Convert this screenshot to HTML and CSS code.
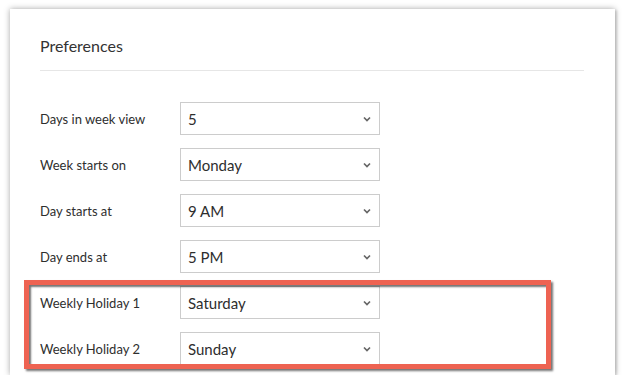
FILE: index.html
```html
<!DOCTYPE html>
<html>
<head>
<meta charset="utf-8">
<link rel="stylesheet" href="styles.css">
</head>
<body>
<div class="card">
  <h2 class="title">Preferences</h2>
  <div class="divider"></div>
  <div class="rows">
    <div class="row"><span class="label">Days in week view</span><div class="select"><span>5</span><svg class="chev" width="8" height="6" viewBox="0 0 8 6"><polyline points="1,1.5 4,4.5 7,1.5"/></svg></div></div>
    <div class="row"><span class="label">Week starts on</span><div class="select"><span>Monday</span><svg class="chev" width="8" height="6" viewBox="0 0 8 6"><polyline points="1,1.5 4,4.5 7,1.5"/></svg></div></div>
    <div class="row"><span class="label">Day starts at</span><div class="select"><span>9 AM</span><svg class="chev" width="8" height="6" viewBox="0 0 8 6"><polyline points="1,1.5 4,4.5 7,1.5"/></svg></div></div>
    <div class="row"><span class="label">Day ends at</span><div class="select"><span>5 PM</span><svg class="chev" width="8" height="6" viewBox="0 0 8 6"><polyline points="1,1.5 4,4.5 7,1.5"/></svg></div></div>
    <div class="row"><span class="label">Weekly Holiday 1</span><div class="select"><span>Saturday</span><svg class="chev" width="8" height="6" viewBox="0 0 8 6"><polyline points="1,1.5 4,4.5 7,1.5"/></svg></div></div>
    <div class="row"><span class="label">Weekly Holiday 2</span><div class="select"><span>Sunday</span><svg class="chev" width="8" height="6" viewBox="0 0 8 6"><polyline points="1,1.5 4,4.5 7,1.5"/></svg></div></div>
  </div>
  <div class="highlight"></div>
</div>
</body>
</html>
```
FILE: styles.css
```css
html, body {
  margin: 0;
  padding: 0;
  background: #ffffff;
}
body {
  font-family: "Lato", "Open Sans", sans-serif;
  color: #333333;
}
.card {
  position: relative;
  box-sizing: border-box;
  width: 605px;
  height: 366px;
  margin: 9px 0 0 10px;
  padding: 28px 31px 0 30px;
  background: #ffffff;
  box-shadow: 0 0 6px rgba(0, 0, 0, 0.35), 2px 1px 2px rgba(0, 0, 0, 0.12);
}
.title {
  margin: 0;
  font-size: 16px;
  font-weight: 400;
  line-height: 18px;
  color: #333333;
}
.divider {
  height: 1px;
  background: #e6e6e6;
  margin-top: 15px;
}
.rows {
  display: flex;
  flex-direction: column;
  gap: 13px;
  margin-top: 31px;
}
.row {
  display: flex;
  align-items: center;
  height: 33px;
}
.label {
  width: 140px;
  font-size: 13px;
  color: #2e2e2e;
}
.select {
  box-sizing: border-box;
  width: 200px;
  height: 33px;
  border: 1px solid #cccccc;
  display: flex;
  align-items: center;
  justify-content: space-between;
  padding: 0 8px 0 7px;
  font-size: 15px;
  color: #2e2e2e;
}
.chev polyline {
  fill: none;
  stroke: #666666;
  stroke-width: 1.7;
}
.highlight {
  position: absolute;
  left: 14px;
  top: 271px;
  width: 527px;
  height: 89px;
  box-sizing: border-box;
  border: 5px solid #ee6352;
  box-shadow: 2px 2px 2px rgba(0, 0, 0, 0.55), inset 2px 2px 2px rgba(0, 0, 0, 0.55);
  pointer-events: none;
}
```
